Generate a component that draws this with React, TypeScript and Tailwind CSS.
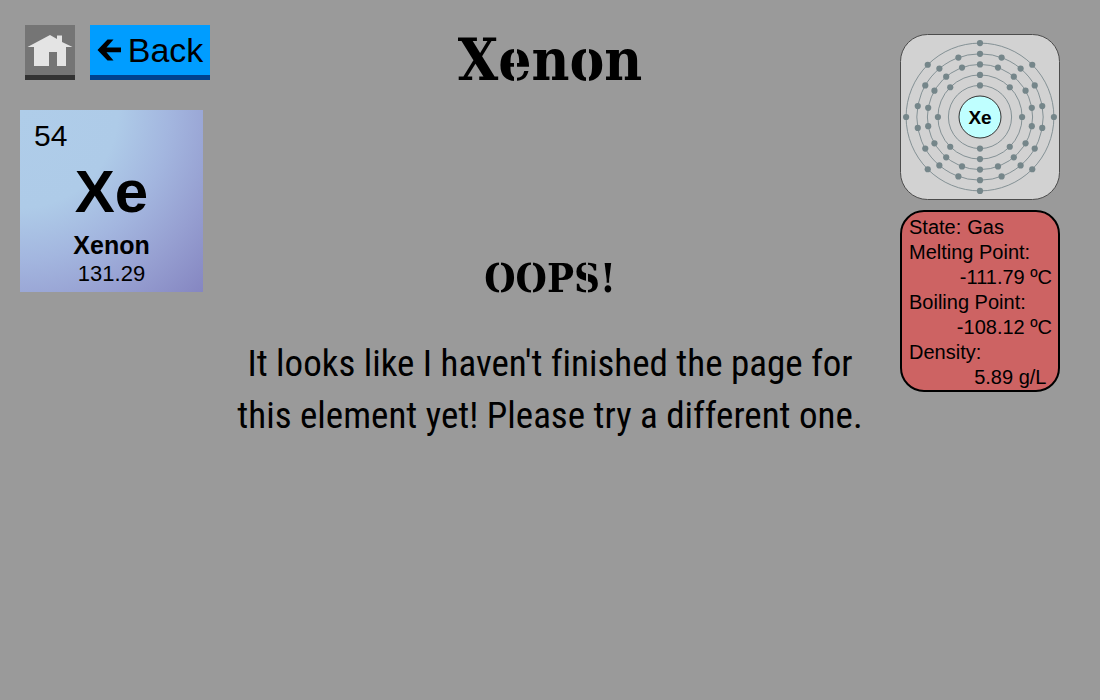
import React from "react";

const SHELLS = [
  { radius: 31.6, electrons: 2 },
  { radius: 42.1, electrons: 8 },
  { radius: 52.6, electrons: 18 },
  { radius: 63.2, electrons: 18 },
  { radius: 73.9, electrons: 8 },
];

function HomeIcon() {
  return (
    <svg viewBox="0 0 50 50" className="h-[50px] w-[50px]" fill="#e4e4e4" aria-hidden="true">
      <path d="M25 10 L32 14 V10.500 H37 V17 L47.500 22 H41 V41 H32 V27 H24 V41 H9 V22 H2.500 Z" />
    </svg>
  );
}

function ArrowIcon() {
  return (
    <svg viewBox="0 0 24 24" className="h-6 w-6" aria-hidden="true">
      <path d="M0.500 12 L10.500 1.500 H16.500 L9.500 9.500 H24 V14.300 H9.500 L16.500 22.500 H10.500 Z" />
    </svg>
  );
}

function AtomDiagram() {
  return (
    <svg
      viewBox="0 0 160 166"
      className="block w-full"
      role="img"
      aria-label="Electron shells of xenon"
    >
      <rect x="0.5" y="0.5" width="159" height="165" rx="27" fill="#d2d2d2" stroke="#4c4c4c" />
      {SHELLS.map(({ radius, electrons }) => (
        <g key={radius}>
          <circle cx="80" cy="83" r={radius} fill="none" stroke="#7b898d" strokeWidth="0.9" />
          {Array.from({ length: electrons }, (_, i) => {
            const angle = (i * 2 * Math.PI) / electrons;
            return (
              <circle
                key={i}
                cx={80 + radius * Math.sin(angle)}
                cy={83 - radius * Math.cos(angle)}
                r="3.1"
                fill="#75868a"
              />
            );
          })}
        </g>
      ))}
      <circle cx="80" cy="83" r="21" fill="#bfffff" stroke="#333333" />
      <text
        x="80"
        y="90"
        textAnchor="middle"
        className="font-['Liberation_Sans',Arial,sans-serif] text-[19px] font-bold"
      >
        Xe
      </text>
    </svg>
  );
}

function ElementTile() {
  return (
    <div className="flex w-[183px] flex-col items-center bg-[radial-gradient(circle_at_0%_0%,#afcde9_0%,#aecbe8_38%,#a3b6df_58%,#969fd1_78%,#8586c1_100%)] pb-1">
      <span className="self-start pt-2 pl-[14px] text-[30px] leading-9">54</span>
      <span className="pt-2 text-[60px] leading-[60px] font-bold">Xe</span>
      <span className="pt-2 text-[25px] leading-[30px] font-bold">Xenon</span>
      <span className="text-[22px] leading-7">131.29</span>
    </div>
  );
}

function Fact({ label, value }: { label: string; value: string }) {
  return (
    <>
      <dt>{label}</dt>
      <dd className="text-right">{value}</dd>
    </>
  );
}

export default function App() {
  return (
    <div className="grid min-h-screen grid-cols-[220px_1fr_220px] items-start bg-[#9a9a9a] font-['Liberation_Sans',Arial,sans-serif] text-black">
      <aside className="pt-[25px] pl-5">
        <nav className="flex gap-[15px] pl-[5px]">
          <a href="#home" aria-label="Home" className="border-b-5 border-[#333333] bg-[#757575]">
            <HomeIcon />
          </a>
          <button
            type="button"
            className="flex h-[55px] w-[120px] cursor-pointer items-center justify-center gap-[7px] border-b-5 border-[#00428f] bg-[#009dff] text-[34px]"
          >
            <ArrowIcon />
            Back
          </button>
        </nav>
        <div className="pt-[30px]">
          <ElementTile />
        </div>
      </aside>

      <main className="text-center">
        <h1 className="pt-[25px] font-['DejaVu_Serif_Condensed','DejaVu_Serif',serif] text-[58px] leading-[70px] font-bold">
          <span className="inline-block bg-[linear-gradient(90deg,black_56px,transparent_56px,transparent_59px,black_59px,black_128px,transparent_128px,transparent_131px,black_131px)] bg-clip-text text-transparent">
            Xenon
          </span>
        </h1>
        <h2 className="pt-[159px] font-['DejaVu_Serif_Condensed','DejaVu_Serif',serif] text-[40px] leading-12 font-bold">
          <span className="inline-block bg-[linear-gradient(90deg,black_15px,transparent_15px,transparent_17px,black_17px,black_47px,transparent_47px,transparent_49px,black_49px,black_102px,transparent_102px,transparent_104px,black_104px)] bg-clip-text text-transparent">
            OOPS!
          </span>
        </h2>
        <p className="pt-9 font-['Roboto_Condensed',Roboto,sans-serif] text-[37px] leading-[52px] [font-variant-ligatures:none]">
          It looks like I haven't finished the page for
          <br />
          this element yet! Please try a different one.
        </p>
      </main>

      <aside className="flex flex-col gap-[10px] pt-[34px] pr-10 pl-5">
        <AtomDiagram />
        <dl className="rounded-3xl border-2 border-black bg-[#cd6363] pt-[3px] pr-[6px] pl-[7px] text-[20px] leading-[25px]">
          <div className="flex gap-[6px]">
            <dt>State:</dt>
            <dd>Gas</dd>
          </div>
          <Fact label="Melting Point:" value="-111.79 ºC" />
          <Fact label="Boiling Point:" value="-108.12 ºC" />
          <Fact label="Density:" value={"5.89 g/L\u00a0"} />
        </dl>
      </aside>
    </div>
  );
}
